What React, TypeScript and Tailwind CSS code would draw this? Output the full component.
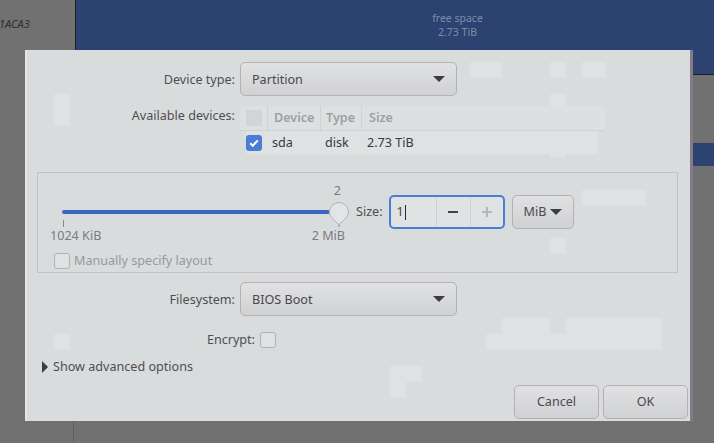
import type { ReactNode } from "react"

const font = "font-['Noto_Sans',sans-serif]"

const Arrow = () => (
  <svg width="12" height="6" viewBox="0 0 12 6" className="shrink-0">
    <path d="M0 0h12L6 6z" fill="#3f3b42" />
  </svg>
)

const Combo = ({ label }: { label: string }) => (
  <div className="flex h-[34px] w-[217px] items-center justify-between rounded-[5px] border border-[#b9aeb1] bg-gradient-to-b from-[#e0e1e2] to-[#cfd1d2] pl-[11px] pr-[11px] text-[#4b484e]">
    <span className="pt-[3px]">{label}</span>
    <Arrow />
  </div>
)

const Row = ({ label, children }: { label: string; children: ReactNode }) => (
  <div className="flex items-center">
    <span className="w-[210px] pt-[3px] text-right text-[#4f4c52]">{label}</span>
    <div className="ml-[5px]">{children}</div>
  </div>
)

const DeviceTable = () => (
  <div className="w-[365px]">
    <div className="flex h-[25px] items-center border-b border-[#cfd2d3] bg-[#dde0e1] font-semibold text-[#a09ea3]">
      <div className="flex h-full w-[28px] items-center justify-center border-r border-[#d0d3d4]">
        <div className="size-4 bg-[#d2d5d6]" />
      </div>
      <div className="flex h-full w-[53px] items-center border-r border-[#d0d3d4] pl-[6px] pt-px">Device</div>
      <div className="flex h-full w-[41px] items-center border-r border-[#d0d3d4] pl-[5px] pt-px">Type</div>
      <div className="pl-[7px] pt-px">Size</div>
    </div>
    <div className="ml-[6px] flex h-[23px] w-[352px] items-center bg-[#dfe2e3] pt-[2px] text-[#3a373d]">
      <div className="-mt-[2px] w-[16px]">
        <div className="flex size-4 items-center justify-center rounded-[3px] bg-[#4a7bd6]">
          <svg width="12" height="12" viewBox="0 0 12 12">
            <path d="M2.2 6.2l2.6 2.6 5-5.4" fill="none" stroke="#fff" strokeWidth="2" />
          </svg>
        </div>
      </div>
      <span className="w-[63px] pl-[10px]">sda</span>
      <span className="w-[42px]">disk</span>
      <span>2.73 TiB</span>
    </div>
  </div>
)

const SizeSlider = () => (
  <div className="flex w-[295px] flex-col text-[#7d7a80]">
    <div className="flex h-[29px] justify-end pr-[4px] pt-[9px] leading-[18px]">2</div>
    <div className="ml-[12px] flex h-[20px] items-start">
      <div className="mt-[8px] h-1 w-[268px] shrink-0 rounded-full bg-[#3a68be]" />
      <svg width="20" height="25" viewBox="0 0 20 25" className="-ml-px shrink-0 overflow-visible">
        <path d="M10 .5a9.5 9.5 0 0 1 9.5 9.5c0 4-3.5 7.5-9.5 12.5C4 17.500 .5 14 .5 10A9.500 9.500 0 0 1 10 .5z" fill="#e2e4e5" stroke="#b5b0b3" />
        <path d="M10 22.500V25" stroke="#8a878d" />
      </svg>
    </div>
    <div className="ml-[13px] -mt-[2px] h-[7px]">
      <div className="h-[7px] w-px bg-[#8a878d]" />
    </div>
    <div className="flex justify-between leading-[18px]">
      <span>1024 KiB</span>
      <span>2 MiB</span>
    </div>
  </div>
)

const SizeSpin = () => (
  <div className="flex h-[34px] w-[116px] items-stretch rounded-[5px] border-2 border-[#4a7dd8] bg-[#e0e3e4]">
    <div className="flex w-[45px] items-center pl-[6px] pt-px text-[#45424a]">
      1<span className="ml-px h-[15px] w-px bg-[#2b2b2b]" />
    </div>
    <div className="flex w-[34px] items-center justify-center border-l border-[#d3cdd0]">
      <div className="h-[2px] w-[10px] bg-[#45424a]" />
    </div>
    <div className="relative flex flex-1 items-center justify-center border-l border-[#d3cdd0]">
      <div className="h-[2px] w-[10px] bg-[#b4b6b8]" />
      <div className="absolute h-[10px] w-[2px] bg-[#b4b6b8]" />
    </div>
  </div>
)

// pale blocks left in the dialog by the screen capture
const Blotches = () => (
  <>
    <div className="absolute left-[27px] top-[44px] h-[32px] w-[16px] bg-[#dfe2e3]" />
    <div className="absolute left-[299px] top-[28px] h-[16px] w-[31px] bg-[#e2e4e5]" />
    <div className="absolute left-[347px] top-[28px] h-[16px] w-[32px] bg-[#e2e4e5]" />
    <div className="absolute left-[443px] top-[12px] h-[16px] w-[32px] bg-[#dfe2e3]" />
    <div className="absolute left-[523px] top-[12px] h-[16px] w-[16px] bg-[#dfe2e3]" />
    <div className="absolute left-[555px] top-[12px] h-[16px] w-[24px] bg-[#dfe2e3]" />
    <div className="absolute left-[523px] top-[44px] h-[63px] w-[16px] bg-[#dfe2e3]" />
    <div className="absolute left-[475px] top-[56px] h-[20px] w-[80px] bg-[#dfe2e3]" />
    <div className="absolute left-[555px] top-[140px] h-[16px] w-[64px] bg-[#dfe2e3]" />
    <div className="absolute left-[523px] top-[188px] h-[16px] w-[16px] bg-[#dfe2e3]" />
    <div className="absolute left-[27px] top-[284px] h-[16px] w-[16px] bg-[#dfe2e3]" />
    <div className="absolute left-[475px] top-[268px] h-[16px] w-[48px] bg-[#dfe2e3]" />
    <div className="absolute left-[539px] top-[268px] h-[16px] w-[96px] bg-[#dfe2e3]" />
    <div className="absolute left-[459px] top-[284px] h-[16px] w-[176px] bg-[#dfe2e3]" />
    <div className="absolute left-[363px] top-[316px] h-[16px] w-[32px] bg-[#dfe2e3]" />
    <div className="absolute left-[363px] top-[332px] h-[16px] w-[16px] bg-[#dfe2e3]" />
  </>
)

export default function App() {
  return (
    <div className={`relative h-[443px] w-[714px] overflow-hidden bg-[#707170] text-[12.6px] ${font}`}>
      {/* stuff behind the modal */}
      <div className="absolute left-0 top-0 flex h-[50px] w-[75px] items-center text-[11px] italic text-[#2f2f2f]">
        <span className="-ml-px -mt-[2px]">1ACA3</span>
      </div>
      <div className="absolute left-[75px] top-0 flex h-[75px] w-[639px] flex-col items-center border-b border-l border-[#1d1d24] bg-[#2c4372] pl-[125px] pt-[11px] text-[10.5px] leading-[14px] text-[#7f8ba6]">
        <span>free space</span>
        <span>2.73 TiB</span>
      </div>
      <div className="absolute left-[690px] top-[143px] h-[23px] w-[24px] bg-[#2c4372]" />
      <div className="absolute left-[73px] top-[421px] h-[22px] w-px bg-[#5f605f]" />
      <div className="absolute left-[690px] top-[50px] h-[371px] w-[3px] bg-[#85798a]" />

      {/* dialog */}
      <div className="absolute left-[25px] top-[50px] h-[371px] w-[665px] border-l-[2px] border-[#ece0e8] bg-[#d9dcdd]">
        <Blotches />
        <div className="relative flex h-full flex-col pt-[12px]">
          <div className="-ml-[2px]">
            <Row label="Device type:">
              <Combo label="Partition" />
            </Row>
            <div className="mt-[10px] flex items-start">
              <span className="w-[210px] pt-px text-right text-[#4f4c52]">Available devices:</span>
              <div className="ml-[5px]"><DeviceTable /></div>
            </div>
          </div>

          <div className="ml-[10px] mr-[12px] mt-[18px] flex h-[101px] flex-col border border-[#c9bfc2] pl-[12px]">
            <div className="flex items-start">
              <SizeSlider />
              <div className="mt-[22px] flex items-start">
                <span className="ml-[11px] mt-[8px] leading-[18px] text-[#4f4c52]">Size:</span>
                <div className="ml-[6px]"><SizeSpin /></div>
                <div className="ml-[7px] flex h-[34px] w-[62px] items-center justify-between rounded-[5px] border border-[#b9aeb1] bg-gradient-to-b from-[#e0e1e2] to-[#cfd1d2] pl-[11px] pr-[11px] text-[#4b484e]">
                  <span className="pt-px">MiB</span>
                  <Arrow />
                </div>
              </div>
            </div>
            <div className="ml-[4px] mt-[7px] flex items-center">
              <div className="size-4 rounded-[3px] border border-[#b9aeb1] bg-[#dfe2e3]" />
              <span className="ml-[4px] text-[#9a979c]">Manually specify layout</span>
            </div>
          </div>

          <div className="-ml-[2px] mt-[9px]">
            <Row label="Filesystem:">
              <Combo label="BIOS Boot" />
            </Row>
            <div className="mt-[15px] flex items-center">
              <span className="w-[230px] text-right text-[#4f4c52]">Encrypt:</span>
              <div className="ml-[5px] size-4 rounded-[3px] border border-[#b9aeb1] bg-[#dfe2e3]" />
            </div>
          </div>

          <div className="ml-[15px] mt-[8px] flex items-center text-[#4f4c52]">
            <svg width="6" height="12" viewBox="0 0 6 12" className="shrink-0">
              <path d="M0 0l6 6-6 6z" fill="#3f3b42" />
            </svg>
            <span className="ml-[5px]">Show advanced options</span>
          </div>

          <div className="mt-auto flex justify-end gap-[4px] pb-[2px] pr-[2px]">
            <button className="h-[34px] w-[85px] rounded-[5px] border border-[#b9aeb1] bg-gradient-to-b from-[#e0e1e2] to-[#cfd1d2] text-[#4b484e]">Cancel</button>
            <button className="h-[34px] w-[85px] rounded-[5px] border border-[#b9aeb1] bg-gradient-to-b from-[#e0e1e2] to-[#cfd1d2] text-[#4b484e]">OK</button>
          </div>
        </div>
      </div>
    </div>
  )
}
